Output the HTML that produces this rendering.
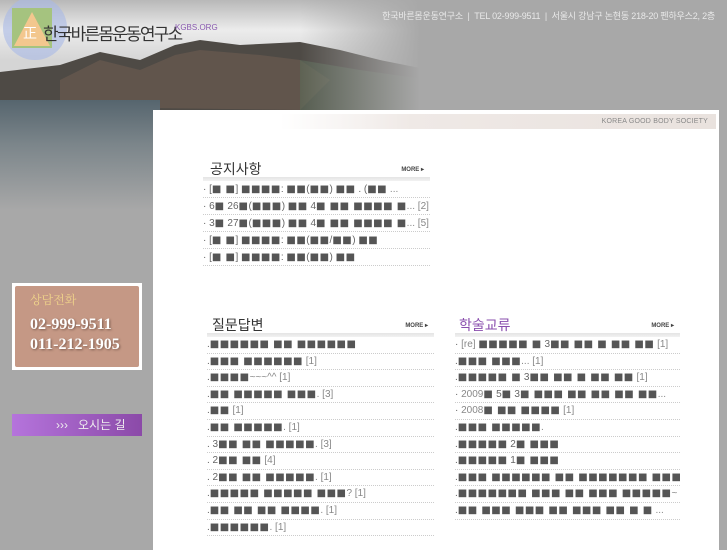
<!DOCTYPE html>
<html><head><meta charset="utf-8"><style>
*{margin:0;padding:0;box-sizing:border-box}
body{width:727px;height:545px;overflow:hidden;background:#a8a8a8;font-family:"Liberation Sans","Noto Sans CJK KR",sans-serif;position:relative}
.abs{position:absolute}
.topinfo{right:12px;top:9px;font-size:9px;color:#e8e8e8;letter-spacing:-0.2px}
.panel{left:153px;top:110px;width:566px;height:440px;background:#fff}
.bar{left:280px;top:114px;width:436px;height:15px;background:linear-gradient(90deg,#fff 0,#efe9e6 30%,#e9e2de 100%);font-size:7px;color:#888;text-align:right;padding:4px 8px 0 0;letter-spacing:.2px}
.h{font-size:14px;color:#333}
.more{font-size:6px;font-weight:bold;color:#444}
.line{height:4px;background:linear-gradient(#e4e4e4,#f2f2f2)}
.item{height:17px;border-bottom:1px dotted #ccc;font-size:10px;color:#666;line-height:17px;white-space:nowrap;overflow:hidden}
.item b{color:#555;font-weight:normal;font-size:10px;font-family:"DejaVu Sans",sans-serif;letter-spacing:0.5px}
.item i{font-style:normal;color:#888;letter-spacing:0}
.q .item{height:16.6px;line-height:16px}
</style></head><body>
<svg class="abs" style="left:0;top:0" width="727" height="300">
<defs>
<linearGradient id="sky" x1="0" y1="0" x2="0" y2="1"><stop offset="0" stop-color="#b8b8b8"/><stop offset=".25" stop-color="#ececec"/><stop offset=".5" stop-color="#d5d5d5"/></linearGradient>
<linearGradient id="lake" x1="0" y1="0" x2="0" y2="1"><stop offset="0" stop-color="#56656e"/><stop offset=".4" stop-color="#7b858a"/><stop offset="1" stop-color="#a8a8a8"/></linearGradient>
<linearGradient id="fade" gradientUnits="userSpaceOnUse" x1="300" y1="0" x2="420" y2="0"><stop offset="0" stop-color="#a8a8a8" stop-opacity="0"/><stop offset="1" stop-color="#a8a8a8" stop-opacity="1"/></linearGradient>
</defs>
<rect width="430" height="120" fill="url(#sky)"/>
<polygon points="0,72 60,65 100,52 140,60 175,45 200,40 240,45 300,42 340,50 380,60 430,70 430,120 0,120" fill="#4e4a45"/>
<polygon points="60,80 100,60 140,70 175,55 200,50 260,55 300,60 330,80 300,110 150,108 60,100" fill="#6a5a50" opacity=".7"/>
<polygon points="300,60 360,70 430,80 430,120 300,120" fill="#5c6a58" opacity=".6"/>
<rect y="100" width="160" height="110" fill="url(#lake)"/>
<rect width="727" height="300" fill="url(#fade)"/>
<circle cx="35" cy="28" r="32" fill="#a9b9e6" opacity=".6"/>
<rect x="12" y="8" width="40" height="40" fill="#a5c37f"/>
<polygon points="32,12 50,46 14,46" fill="#f3c78e"/>
<text x="23" y="38" font-size="14" fill="#fff" font-family="Noto Sans CJK KR">正</text>
</svg>
<div class="abs" style="left:43px;top:20px;font-size:17px;color:#333;letter-spacing:-1.8px">한국바른몸운동연구소</div>
<div class="abs" style="left:175px;top:23px;font-size:8px;color:#8a5bb0">KGBS.ORG</div>
<div class="abs topinfo">한국바른몸운동연구소 &nbsp;|&nbsp; TEL 02-999-9511 &nbsp;|&nbsp; 서울시 강남구 논현동 218-20 펜하우스2, 2층</div>
<div class="abs panel"></div>
<div class="abs bar">KOREA GOOD BODY SOCIETY</div>

<div class="abs" style="left:12px;top:283px;width:130px;height:87px;background:#fff;padding:3px">
<div style="background:#c59885;height:81px;border-radius:2px;padding:5px 0 0 15px">
<div style="color:#f0d38a;font-size:12px;font-family:'Noto Serif CJK SC',serif">상담전화</div>
<div style="color:#fff;font-family:'Liberation Serif',serif;font-weight:bold;font-size:16px;line-height:20px;margin-top:7px;text-shadow:1px 1px 2px #7a5a4d">02-999-9511<br>011-212-1905</div>
</div></div>
<div class="abs" style="left:12px;top:414px;width:130px;height:22px;background:linear-gradient(90deg,#b574dc,#8b4aa8);color:#eee;font-size:12px;line-height:22px;padding-left:44px">›››&nbsp;&nbsp; 오시는 길</div>

<div class="abs" style="left:203px;top:159px;width:227px">
<div style="display:flex;justify-content:space-between;padding:0 6px 0 7px;height:18px"><span class="h">공지사항</span><span class="more" style="margin-top:7px">MORE ▸</span></div>
<div class="line"></div>
<div class="item">· [<b>■ ■</b>] <b>■■■■</b>: <b>■■</b>(<b>■■</b>) <b>■■</b> . (<b>■■</b> <i>...</i></div>
<div class="item">· 6<b>■</b> 26<b>■</b>(<b>■■■</b>) <b>■■</b> 4<b>■ ■■ ■■■■ ■</b><i>... [2]</i></div>
<div class="item">· 3<b>■</b> 27<b>■</b>(<b>■■■</b>) <b>■■</b> 4<b>■ ■■ ■■■■ ■</b><i>... [5]</i></div>
<div class="item">· [<b>■ ■</b>] <b>■■■■</b>: <b>■■</b>(<b>■■</b>/<b>■■</b>) <b>■■</b></div>
<div class="item">· [<b>■ ■</b>] <b>■■■■</b>: <b>■■</b>(<b>■■</b>) <b>■■</b></div>
</div>

<div class="abs q" style="left:207px;top:315px;width:227px">
<div style="display:flex;justify-content:space-between;padding:0 6px 0 5px;height:18px"><span class="h">질문답변</span><span class="more" style="margin-top:7px">MORE ▸</span></div>
<div class="line"></div>
<div class="item">.<b>■■■■■■ ■■ ■■■■■■</b></div>
<div class="item">.<b>■■■ ■■■■■■</b> <i>[1]</i></div>
<div class="item">.<b>■■■■</b><i>~~~^^ [1]</i></div>
<div class="item">.<b>■■ ■■■■■ ■■■</b><i>. [3]</i></div>
<div class="item">.<b>■■</b> <i>[1]</i></div>
<div class="item">.<b>■■ ■■■■■</b><i>. [1]</i></div>
<div class="item">. 3<b>■■ ■■ ■■■■■</b><i>. [3]</i></div>
<div class="item">. 2<b>■■ ■■</b> <i>[4]</i></div>
<div class="item">. 2<b>■■ ■■ ■■■■■</b><i>. [1]</i></div>
<div class="item">.<b>■■■■■ ■■■■■ ■■■</b><i>? [1]</i></div>
<div class="item">.<b>■■ ■■ ■■ ■■■■</b><i>. [1]</i></div>
<div class="item">.<b>■■■■■■</b><i>. [1]</i></div>
</div>

<div class="abs q" style="left:455px;top:315px;width:225px">
<div style="display:flex;justify-content:space-between;padding:0 6px 0 4px;height:18px"><span class="h" style="color:#8a4fae">학술교류</span><span class="more" style="margin-top:7px">MORE ▸</span></div>
<div class="line"></div>
<div class="item">· <i>[re]</i> <b>■■■■■ ■</b> 3<b>■■ ■■ ■ ■■ ■■</b> <i>[1]</i></div>
<div class="item">.<b>■■■ ■■■</b><i>... [1]</i></div>
<div class="item">.<b>■■■■■ ■</b> 3<b>■■ ■■ ■ ■■ ■■</b> <i>[1]</i></div>
<div class="item">· <i>2009</i><b>■</b> 5<b>■</b> 3<b>■ ■■■ ■■ ■■ ■■ ■■</b><i>...</i></div>
<div class="item">· <i>2008</i><b>■ ■■ ■■■■</b> <i>[1]</i></div>
<div class="item">.<b>■■■ ■■■■■</b><i>.</i></div>
<div class="item">.<b>■■■■■</b> 2<b>■ ■■■</b></div>
<div class="item">.<b>■■■■■</b> 1<b>■ ■■■</b></div>
<div class="item">.<b>■■■ ■■■■■■ ■■ ■■■■■■■ ■■■</b><i>...</i></div>
<div class="item">.<b>■■■■■■■ ■■■ ■■ ■■■ ■■■■■</b><i>~</i></div>
<div class="item">.<b>■■ ■■■ ■■■ ■■ ■■■ ■■ ■ ■</b> <i>...</i></div>
</div>
</body></html>
